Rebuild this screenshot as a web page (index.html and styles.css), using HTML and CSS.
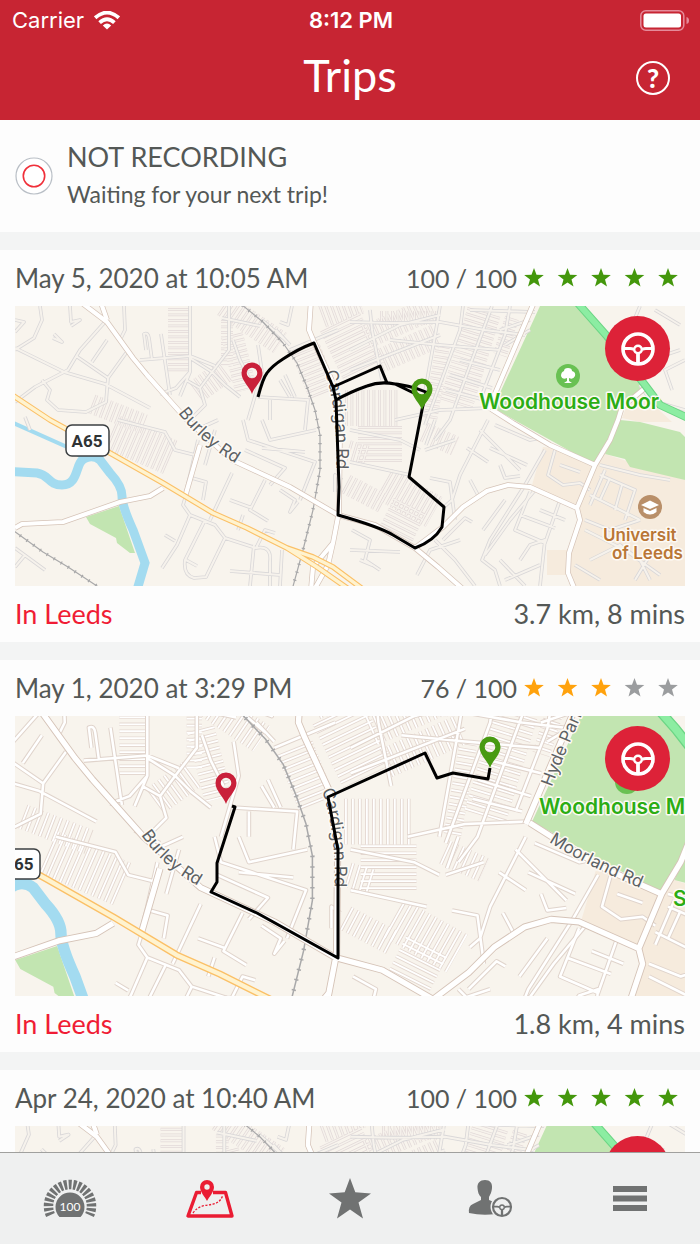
FILE: index.html
```html
<!DOCTYPE html>
<html lang="en">
<head>
<meta charset="utf-8">
<meta name="viewport" content="width=device-width, initial-scale=1">
<title>Trips</title>
<link rel="stylesheet" href="styles.css">
</head>
<body>
<svg class="defs" aria-hidden="true">
  <defs>
    <path id="star" d="M0-10 2.5-3.2 9.8-3 4 1.5 6 8.5 0 4.4-6 8.5-4 1.5-9.8-3-2.5-3.2Z"/>
    <path id="pin" fill-rule="evenodd" d="M0 0C-2-7-10.500-13-10.500-21A10.500 10.500 0 0 1 10.500-21C10.500-13 2-7 0 0ZM0-26.300A5.300 5.300 0 0 0 0-15.700 5.300 5.300 0 0 0 0-26.300Z"/>
    <g id="wheel" fill="none" stroke="currentColor">
      <circle r="15" stroke-width="3.600"/>
      <path stroke-width="2.800" d="M-14-.5H-8Q-6-.5-4 .5M14-.5H8Q6-.5 4 .5"/>
      <path stroke-width="3.800" d="M0 4V14"/>
      <circle r="3.800" cy=".5" stroke-width="2.400"/>
    </g>

    <g id="land">
      <path class="campus" d="M543 447 605 454 685 480V586H570L568 556 580 520 577 507 532 485ZM547 550H567V575H547ZM627 405 645 397 672 422 640 422 622 418Z"/>
      <path class="park" d="M540 306H582L606 335 645 385 622 405 618 420 610 440 595 465 493 408ZM620 420 640 422 680 432 685 437V480L630 467 625 459 605 454ZM86 517 119 506 135 553H130L117 543 116 538 90 524Z"/>
      <path class="river" d="M0 471 37 473C50 475 48 485 62 485S76 470 80 463 94 455 100 460L110 473Q122 486 122 496T133 530L145 563 137 590"/>
      <path class="stream" d="M0 417 67 447 86 460"/>
    </g>

    <g id="streets">
      <path d="M15 320 24 322 15 332M40 306 42 320 34 338 15 350M15 348 64 372 105 384 150 408M104 323 80 350 68 370 35 387 15 402M70 306 71 322 80 320 71 326M54 334 62 342 53 338M107 340 92 362M76 356 108 378 126 353M108 378 106 402 86 412 58 410 47 400 50 390 42 380M25 417 30 430M124 306 125 330 121 338M146 350 144 334Q148 332 149 338L152 360M161 334 170 395M140 360 190 356 215 366M190 306V372L176 388 160 394M190 358 212 372 200 388 186 380M200 388 205 405 190 420M190 372 180 396M229 306V350L212 372 225 385 240 397M233 340 240 360 250 380M222 318 260 326M258 345 262 372 248 420M262 320 283 338M292 306 288 325 280 322M276 330 290 345M290 350 338 330M258 397 308 400 305 430M270 400V420M285 375 295 397M280 380 290 397"/>
      <path d="M118 420 165 432 175 450 195 455M200 425 180 415M196 430 218 420M198 440 190 475 185 495M215 430 205 465M232 473 210 520M192 478 206 482 203 500M186 495 183 505 190 515 177 545 162 568M165 535 175 541M190 515 215 525 225 538 256 548 265 530 275 533M205 520 185 560Q183 575 194 578L206 577 225 538M186 560 197 566M254 545 250 586M256 548Q272 545 270 562V586M230 571 280 575M282 550 280 586M265 480 250 510 268 521M230 500 252 508M243 515 238 530M280 490 295 500 290 512 298 502M243 420 248 440 315 462 300 500M262 420 270 440 316 430M245 450 285 468 270 485M262 448 305 452M15 548 45 570M25 555 15 567M342 480 335 475V492M352 530 370 540 365 560 380 570M350 550 400 552M360 560 372 565"/>
      <path d="M350 322 390 323 440 322 485 330 525 335M350 350 400 325 440 315M370 310 372 330 382 380M440 306 436 330 420 420M463 306 460 330 425 425M492 306 472 360 450 420 435 440M510 306 505 335 480 400M530 320 500 330M530 330 505 345M470 310 535 312M350 370 440 335M390 340 440 345 500 350M395 420 440 410 490 408M460 360 500 370M450 375 492 388M446 390 485 400M350 430 400 440 420 450M410 475 350 462M435 420 426 445M455 440 425 450M488 420 460 475 452 500 444 507M495 425 530 440 540 438M480 430 520 470M490 448 527 465M500 465 505 478 520 476M467 448 488 462M470 480 478 495M545 450 525 485 490 540 482 560 495 570 500 586M505 500 483 530M535 490 510 520 485 555M430 478 450 482 455 520M443 540 465 518 472 522M435 540 455 560 475 586M417 575 430 550 460 540"/>
      <path d="M530 492 515 530 545 543 560 500M540 510 565 520M520 515 555 528M520 560 530 545 545 540 540 586M500 560 525 586M505 580 540 565M555 450 548 475 563 485 580 483 590 490M560 465 580 472M600 465 640 475 670 480M605 470 590 505M600 475 635 490 625 520M610 478 600 500M622 485 615 510M590 495 620 510 640 520M585 520 610 530 640 520M585 530 625 550 660 575M590 560 620 545 640 560 650 580M575 565 600 580M650 555 635 580M640 306 630 330 650 335M655 310 680 325M685 360 665 370 672 390M665 355 680 350M640 385 650 400 685 410"/>
    </g>

    <g id="terraces">
      <path stroke-width="22" d="M179 308V374"/>
      <path stroke-width="12" d="M227 320V366"/>
      <path stroke-width="24" d="M224 305 280 343M196 392 226 370"/>
      <path stroke-width="30" d="M306 350 324 395"/>
      <path stroke-width="44" d="M340 322 364 372"/>
      <path stroke-width="24" d="M322 316 360 302M366 337 432 308M378 362 436 336"/>
      <path stroke-width="34" d="M484 312 456 404"/>
      <path stroke-width="14" d="M443 345 430 420M380 318H440M512 318 500 355"/>
      <path stroke-width="36" d="M345 408H398M112 432 172 458"/>
      <path stroke-width="44" d="M380 426V462"/>
      <path stroke-width="20" d="M346 484 384 504M92 404 144 424M348 450 368 456M424 432 455 446"/>
      <path stroke-width="34" d="M384 484 434 512"/>
      <path stroke-width="36" d="M410 506 396 534"/>
      <path stroke-width="22" d="M232 335 246 390"/>
    </g>

    <g id="mains">
      <path d="M15 528 22 524 63 522 120 502 150 496 163 488M100 300 107 320M200 445 185 497M535 300 488 410M338 517 333 543 313 567 311 590M333 543 328 565 314 590"/>
      <path d="M78 300 107 322 133 358 147 375 187 420 232 460 290 487 338 515 375 525 415 548 438 567 464 590M311 300 309 330 314 342 333 383 340 420 339 515"/>
      <path d="M415 548 443 527 463 507 487 491 508 485 530 487 577 508 595 465 610 440 618 420 622 407 645 388M577 508 580 520 569 553 568 573 575 590M491 409 513 423 550 445 595 465"/>
    </g>
    <path id="trunk" d="M0 387 50 420 110 453 163 483 213 513 247 528 287 548 317 567 350 590M287 548 313 557 333 567 364 590"/>
    <path id="green-road" d="M575 300 606 335 645 385 660 405 690 419"/>
    <path id="rail" d="M236 300 263 322 283 343 297 363 307 387 315 410 320 435 320 470 313 510 303 550 292 590M0 521 43 552 68 567 100 588"/>

    <g id="basemap">
      <use href="#land"/>
      <use href="#terraces" class="terrace-case"/>
      <use href="#terraces" class="terrace-fill"/>
      <use href="#streets" class="street-case"/>
      <use href="#streets" class="street-fill"/>
      <use href="#rail" class="rail"/>
      <use href="#rail" class="rail-ties"/>
      <use href="#mains" class="main-case"/>
      <use href="#mains" class="main-fill"/>
      <use href="#trunk" class="trunk-case"/>
      <use href="#trunk" class="trunk-fill"/>
      <use href="#green-road" class="green-case"/>
      <use href="#green-road" class="green-fill"/>
    </g>
  </defs>
</svg>

<header class="header">
  <div class="status">
    <div class="status-left">Carrier
      <svg width="26" height="19" viewBox="0 0 26 19" aria-hidden="true"><g fill="none" stroke="#fff" stroke-width="3.800"><path d="M1.200 6.800Q13-3.600 24.800 6.800"/><path d="M5.600 11.600Q13 4.800 20.400 11.600"/></g><path fill="#fff" d="M8.800 14.400Q13 10.800 17.200 14.400L13 18.600Z"/></svg>
    </div>
    <div class="status-time">8:12 PM</div>
    <div class="status-right">
      <svg width="50" height="21" viewBox="0 0 50 21" aria-hidden="true"><rect x=".8" y=".8" width="43" height="19.400" rx="5" fill="none" stroke="#e58b9a" stroke-width="1.500"/><rect x="3.500" y="3.500" width="37.500" height="14" rx="2.500" fill="#fff"/><path fill="#e58b9a" d="M46.500 7Q49 7.500 49 10.500T46.500 14Z"/></svg>
    </div>
  </div>
  <div class="titlebar">
    <h1 class="title">Trips</h1>
    <button class="help" type="button" aria-label="Help">?</button>
  </div>
</header>

<main class="feed">
  <section class="recording">
    <svg class="record-icon" viewBox="0 0 38 38" aria-hidden="true"><circle cx="19" cy="19" r="18" fill="#fff" stroke="#b9bfc6" stroke-width="1.200"/><circle cx="19" cy="19" r="10.700" fill="none" stroke="#f0303a" stroke-width="1.600"/></svg>
    <div>
      <h2 class="recording-title">NOT RECORDING</h2>
      <p class="recording-text">Waiting for your next trip!</p>
    </div>
  </section>

  <article class="trip">
    <div class="trip-head">
      <h2 class="trip-date">May 5, 2020 at 10:05 AM</h2>
      <div class="score">100 / 100
        <svg class="stars good" viewBox="0 0 168 20" role="img" aria-label="5 stars"><use href="#star" x="17" y="10"/><use href="#star" x="50.500" y="10"/><use href="#star" x="84" y="10"/><use href="#star" x="117.500" y="10"/><use href="#star" x="151" y="10"/></svg>
      </div>
    </div>
    <div class="map-wrap">
      <svg class="map" viewBox="15 306 670 280" role="img" aria-label="Trip route in Leeds">
        <defs>
          <path id="burley-1" d="M178 413Q203 446 242 467"/>
          <path id="cardigan-1" d="M325 372Q339 415 336 480"/>
        </defs>
        <use href="#basemap"/>
        <rect class="shield" x="66" y="425" width="43" height="31" rx="6"/>
        <text class="shield-text" x="87" y="447">A65</text>
        <text class="road-name"><textPath href="#burley-1">Burley Rd</textPath></text>
        <text class="road-name"><textPath href="#cardigan-1">Cardigan Rd</textPath></text>
        <circle cx="568" cy="376" r="12" fill="#69c153"/>
        <path fill="#fff" d="M568 368Q572 368 572 371 576 372 575 376 573 380 569 378V381L572 383H564L567 381V378Q562 380 561 376 561 372 564 371 564 368 568 368Z"/>
        <text class="place park-name" x="479" y="409">Woodhouse Moor</text>
        <circle cx="650" cy="507" r="12" fill="#b98f69"/>
        <path fill="#fff" d="M641 505 650 500.500 659 505 650 509ZM643.500 508 650 511 656.500 508V512Q650 517 643.500 512Z"/>
        <text class="place campus-name" x="603" y="541">Universit</text>
        <text class="place campus-name" x="612" y="559">of Leeds</text>
        <path class="route" d="M258 397Q263 378 267 373 272 366 283 359 298 349 314 343L333 387 380 366 387 383M422 397 395 384Q380 381 367 386 350 392 336 400M387 383Q410 385 426 392L422 410 409 477 444 507 442 527Q434 541 415 548L393 535Q380 527 338 515L339 487 336 400 333 387"/>
        <use href="#pin" x="252" y="394" class="pin-end"/>
        <use href="#pin" x="422" y="410" class="pin-start"/>
      </svg>
      <button class="mode" type="button" aria-label="Driver trip"><svg viewBox="-18 -18 36 36"><use href="#wheel"/></svg></button>
    </div>
    <div class="trip-foot"><a class="place-link" href="#">In Leeds</a><span>3.7 km, 8 mins</span></div>
  </article>

  <article class="trip">
    <div class="trip-head">
      <h2 class="trip-date">May 1, 2020 at 3:29 PM</h2>
      <div class="score">76 / 100
        <svg class="stars fair" viewBox="0 0 168 20" role="img" aria-label="3 of 5 stars"><use href="#star" x="17" y="10"/><use href="#star" x="50.500" y="10"/><use href="#star" x="84" y="10"/><use href="#star" x="117.500" y="10" class="off"/><use href="#star" x="151" y="10" class="off"/></svg>
      </div>
    </div>
    <div class="map-wrap">
      <svg class="map map-close" viewBox="15 716 670 280" role="img" aria-label="Trip route in Leeds">
        <defs>
          <path id="burley-2" d="M141 835Q165 870 206 890"/>
          <path id="cardigan-2" d="M322 790Q338 838 334 900"/>
          <path id="hyde-2" d="M552 787Q566 750 592 692"/>
          <path id="moorland-2" d="M549 842Q590 868 650 892"/>
        </defs>
        <use href="#basemap" transform="matrix(1.270 0 0 1.270 -94 303.400)"/>
        <rect class="shield" x="-4" y="849" width="44" height="30" rx="6"/>
        <text class="shield-text" x="18" y="870">A65</text>
        <text class="road-name"><textPath href="#burley-2">Burley Rd</textPath></text>
        <text class="road-name"><textPath href="#cardigan-2">Cardigan Rd</textPath></text>
        <text class="road-name"><textPath href="#hyde-2">Hyde Park</textPath></text>
        <text class="road-name"><textPath href="#moorland-2">Moorland Rd</textPath></text>
        <circle cx="627" cy="782" r="12" fill="#69c153"/>
        <text class="place park-name" x="539" y="814">Woodhouse M</text>
        <text class="place park-name" x="673" y="906">S</text>
        <path class="route" d="M232 806 235 807 217 863V882L211 892 257 913 338 958V850L328 797 425 753 437 778 453 773 488 779 490 768"/>
        <use href="#pin" x="226" y="804" class="pin-end"/>
        <use href="#pin" x="490" y="768" class="pin-start"/>
      </svg>
      <button class="mode" type="button" aria-label="Driver trip"><svg viewBox="-18 -18 36 36"><use href="#wheel"/></svg></button>
    </div>
    <div class="trip-foot"><a class="place-link" href="#">In Leeds</a><span>1.8 km, 4 mins</span></div>
  </article>

  <article class="trip">
    <div class="trip-head">
      <h2 class="trip-date">Apr 24, 2020 at 10:40 AM</h2>
      <div class="score">100 / 100
        <svg class="stars good" viewBox="0 0 168 20" role="img" aria-label="5 stars"><use href="#star" x="17" y="10"/><use href="#star" x="50.500" y="10"/><use href="#star" x="84" y="10"/><use href="#star" x="117.500" y="10"/><use href="#star" x="151" y="10"/></svg>
      </div>
    </div>
    <div class="map-wrap">
      <svg class="map" viewBox="15 1126 670 280" role="img" aria-label="Trip route in Leeds">
        <use href="#basemap" transform="matrix(1.045 0 0 1.045 -15 800.200)"/>
      </svg>
      <button class="mode" type="button" aria-label="Driver trip"><svg viewBox="-18 -18 36 36"><use href="#wheel"/></svg></button>
    </div>
  </article>
</main>

<nav class="tabs" aria-label="Main">
  <button class="tab" type="button" aria-label="Score">
    <svg width="56" height="42" viewBox="42 1178 56 42"><path fill="none" stroke="currentColor" stroke-width="9.500" stroke-dasharray="3 1.630" d="M50.500 1215.100A21.500 21.500 0 1 1 89.500 1215.100"/><path fill="currentColor" d="M59.500 1217A14.500 14.500 0 1 1 80.500 1217Z"/><text class="tab-score" x="70" y="1211">100</text></svg>
  </button>
  <button class="tab active" type="button" aria-label="Trips" aria-current="page">
    <svg width="52" height="42" viewBox="184 1178 52 42"><path fill="none" stroke="currentColor" stroke-width="3.400" stroke-linejoin="round" d="M201 1192.500H196.500L188 1216H232L225.500 1192.500H213"/><path fill="none" stroke="currentColor" stroke-width="1.300" stroke-dasharray="2.200 1.500" d="M193 1213C203 1199 217 1211 223 1195"/><path fill="currentColor" fill-rule="evenodd" d="M207 1201C205 1197 200 1192 200 1187A7 7 0 0 1 214 1187C214 1192 209 1197 207 1201ZM207 1184.300A2.700 2.700 0 0 0 207 1189.700 2.700 2.700 0 0 0 207 1184.300Z"/></svg>
  </button>
  <button class="tab" type="button" aria-label="Favourites">
    <svg width="44" height="42" viewBox="328 1178 44 42"><path fill="currentColor" d="M350 1178 355.300 1192.300 371 1193.500 358.500 1202.500 363 1218.500 350 1209.500 337 1218.500 341.500 1202.500 329 1193.500 344.700 1192.300Z"/></svg>
  </button>
  <button class="tab" type="button" aria-label="Driver profile">
    <svg width="46" height="42" viewBox="467 1178 46 42"><path fill="currentColor" d="M485 1180C490 1180 492.500 1183 492 1188 491.500 1193 490 1195 489 1197V1200Q497 1203 499 1206L496 1214Q482 1216 469 1213 468 1206 473 1204L481 1200V1197C479 1195 478 1193 477.500 1188 477 1183 480 1180 485 1180Z"/><circle cx="502" cy="1207" r="11.500" fill="#eff0f0"/><use href="#wheel" transform="translate(502 1207) scale(.6)"/></svg>
  </button>
  <button class="tab" type="button" aria-label="Menu">
    <svg width="34" height="42" viewBox="613 1178 34 42"><path fill="currentColor" d="M613 1186H647V1192H613ZM613 1195.500H647V1201.500H613ZM613 1205H647V1211H613Z"/></svg>
  </button>
</nav>
</body>
</html>
```
FILE: styles.css
```css
* { box-sizing: border-box; }

body {
  display: flex;
  flex-direction: column;
  height: 100vh;
  margin: 0;
  overflow: hidden;
  background: #f3f4f4;
  color: #545856;
  font-family: Lato, "Liberation Sans", sans-serif;
  font-size: 26px;
}

h1, h2, p { margin: 0; font-weight: 400; }
button { padding: 0; border: 0; font: inherit; cursor: pointer; }
svg { display: block; }
.defs { position: absolute; width: 0; height: 0; }

.header { flex: none; background: #c72533; color: #fff; }

.status {
  display: grid;
  grid-template-columns: 1fr auto 1fr;
  align-items: center;
  height: 40px;
  padding: 0 10px 0 12px;
  font-family: Inter, "Liberation Sans", sans-serif;
  font-size: 22px;
}
.status-left { display: flex; align-items: center; gap: 10px; }
.status-time { font-weight: 600; }
.status-right { display: flex; justify-content: flex-end; }

.titlebar {
  display: grid;
  grid-template-columns: 1fr auto 1fr;
  align-items: center;
  height: 80px;
  padding: 0 30px 8px;
}
.title { grid-column: 2; padding-bottom: 2px; font-size: 45px; line-height: 56px; }
.help {
  justify-self: end;
  width: 34px;
  height: 34px;
  margin-top: 4px;
  border: 2px solid #fff;
  border-radius: 50%;
  background: none;
  color: #fff;
  font-size: 26px;
  font-weight: 900;
  line-height: 28px;
}

.feed {
  display: flex;
  flex: 1;
  flex-direction: column;
  gap: 18px;
  min-height: 0;
  overflow-y: auto;
  scrollbar-width: none;
}
.recording, .trip { flex: none; background: #fdfdfd; }

.recording {
  display: flex;
  align-items: center;
  gap: 14px;
  height: 112px;
  padding: 0 15px;
}
.record-icon { width: 38px; height: 38px; }
.recording-title { font-size: 27px; line-height: 38px; }
.recording-text { padding-bottom: 2px; font-size: 23px; line-height: 36px; }

.trip { padding: 0 15px; }
.trip-head, .trip-foot {
  display: flex;
  align-items: center;
  justify-content: space-between;
  height: 56px;
}
.trip-foot { padding-bottom: 2px; font-size: 27px; }
.trip-date { font-size: 26px; }
.score { display: flex; align-items: center; font-size: 25px; }
.stars { width: 168px; height: 20px; }
.good { fill: #44970c; }
.fair { fill: #ffa20d; }
.stars .off { fill: #9b9d9f; }
.place-link { color: #f01c34; text-decoration: none; }

.map-wrap { position: relative; }
.mode {
  position: absolute;
  top: 10px;
  right: 15px;
  display: grid;
  place-items: center;
  width: 65px;
  height: 65px;
  border-radius: 50%;
  background: #dd2238;
  color: #fff;
}
.mode svg { width: 36px; height: 36px; }

/* Map drawing */
.map {
  --case: #d9d7d8;
  --street: #f6f2ec;
  --terrace: #e2d9d8;
  width: 100%;
  height: auto;
  overflow: hidden;
  background: #f8f4ed;
}
.map-close { --case: #e0d4cc; --street: #fff; --terrace: #e4d8d1; }
.park { fill: #c2e5b1; }
.campus { fill: #f6ebdd; }
.river { fill: none; stroke: #a3dbf0; stroke-width: 9; }
.stream { fill: none; stroke: #a3dbf0; stroke-width: 4; }
.street-case, .street-fill, .main-case, .main-fill,
.trunk-case, .trunk-fill, .green-case, .green-fill,
.terrace-case, .terrace-fill, .rail, .rail-ties { fill: none; stroke-linejoin: round; }
.street-case { stroke: var(--case); stroke-width: 3.6px; }
.street-fill { stroke: var(--street); stroke-width: 2px; }
.terrace-case { stroke: var(--terrace); stroke-dasharray: 2.8 2.7; }
.terrace-fill { stroke: var(--street); stroke-dasharray: 1.4 4.1; stroke-dashoffset: -.7; }
.main-case { stroke: #d5c3b7; stroke-width: 5.6px; }
.main-fill { stroke: #fff; stroke-width: 4.2px; }
.trunk-case { stroke: #fbc067; stroke-width: 5.6px; }
.trunk-fill { stroke: #fff3cf; stroke-width: 3.4px; }
.green-case { stroke: #6cd585; stroke-width: 8px; }
.green-fill { stroke: #8ceda2; stroke-width: 6px; }
.rail { stroke: #a9a9aa; stroke-width: 1.2px; }
.rail-ties { stroke: #a9a9aa; stroke-width: 3.4px; stroke-dasharray: 1.2 7; }

.route { fill: none; stroke: #000; stroke-width: 3; stroke-linejoin: round; }
.pin-end { fill: #c9203a; }
.pin-start { fill: #489a12; }
.shield { fill: #fff; stroke: #3b3f41; stroke-width: 1.5; }
.shield-text {
  fill: #2f3334;
  font-family: "Liberation Sans Narrow", Roboto, sans-serif;
  font-size: 17px;
  font-weight: 700;
  text-anchor: middle;
}
.road-name, .place {
  font-family: Inter, "Liberation Sans", sans-serif;
  paint-order: stroke;
  stroke: #fdfaf5;
  stroke-linejoin: round;
  stroke-width: 3;
}
.road-name { fill: #5c6164; font-size: 17px; }
.place { font-weight: 600; }
.park-name { fill: #2bad14; font-size: 21px; }
.campus-name { fill: #b97636; font-size: 17px; }

.tabs {
  display: grid;
  flex: none;
  grid-template-columns: repeat(5, 1fr);
  height: 92px;
  border-top: 1px solid #a0a09e;
  background: #eff0f0;
}
.tab { display: grid; place-items: center; background: none; color: #707272; }
.tab.active { color: #ea1c33; }
.tab-score { fill: #fff; font-size: 12px; font-weight: 400; text-anchor: middle; }
```
